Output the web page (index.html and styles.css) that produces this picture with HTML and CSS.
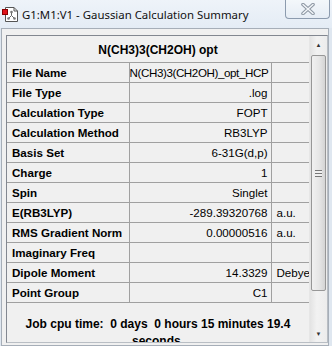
FILE: index.html
```html
<!DOCTYPE html>
<html lang="en">
<head>
    <meta charset="UTF-8">
    <title>G1:M1:V1 - Gaussian Calculation Summary</title>
    <link rel="stylesheet" href="styles.css">
</head>
<body>
    <div class="window">
        <div class="titlebar">
            <svg class="app-icon" width="17" height="17" viewBox="0 0 17 17">
                <path d="M3.5 1.5 H12 L15.5 5 V15.5 H3.5 Z" fill="#fff" stroke="#555"/>
                <path d="M12 1.5 V5 H15.5" fill="none" stroke="#555"/>
                <line x1="9.5" y1="6" x2="9.5" y2="9.5" stroke="#666"/>
                <line x1="9.5" y1="9.5" x2="6.5" y2="12.5" stroke="#666"/>
                <line x1="9.5" y1="9.5" x2="12.5" y2="12.5" stroke="#666"/>
                <circle cx="9.5" cy="6" r="1.3" fill="#777"/>
                <circle cx="6.5" cy="12.5" r="1.3" fill="#777"/>
                <circle cx="12.5" cy="12.5" r="1.3" fill="#777"/>
                <rect x="0.5" y="3.5" width="5" height="5" fill="#e0141b" stroke="#8a0000"/>
            </svg>
            <span class="title">G1:M1:V1 - Gaussian Calculation Summary</span>
            <div class="close-btn">
                <svg width="16" height="12" viewBox="0 0 16 12">
                    <path d="M3 1.5 L13 10.5 M13 1.5 L3 10.5" stroke="#8e98a4" stroke-width="3.6" stroke-linecap="round"/>
                    <path d="M3 1.5 L13 10.5 M13 1.5 L3 10.5" stroke="#f4f7fa" stroke-width="1.4" stroke-linecap="round"/>
                </svg>
            </div>
        </div>
        <div class="client">
            <div class="frame">
                <div class="view">
                    <div class="view-content">
                        <div class="summary-head">N(CH3)3(CH2OH) opt</div>
                        <table class="summary">
                            <colgroup>
                                <col class="c-label">
                                <col class="c-val">
                                <col class="c-unit">
                            </colgroup>
                            <tr><th>File Name</th><td class="val tight">N(CH3)3(CH2OH)_opt_HCP</td><td class="unit"></td></tr>
                            <tr><th>File Type</th><td class="val">.log</td><td class="unit"></td></tr>
                            <tr><th>Calculation Type</th><td class="val">FOPT</td><td class="unit"></td></tr>
                            <tr><th>Calculation Method</th><td class="val">RB3LYP</td><td class="unit"></td></tr>
                            <tr><th>Basis Set</th><td class="val">6-31G(d,p)</td><td class="unit"></td></tr>
                            <tr><th>Charge</th><td class="val">1</td><td class="unit"></td></tr>
                            <tr><th>Spin</th><td class="val">Singlet</td><td class="unit"></td></tr>
                            <tr><th>E(RB3LYP)</th><td class="val">-289.39320768</td><td class="unit">a.u.</td></tr>
                            <tr><th>RMS Gradient Norm</th><td class="val">0.00000516</td><td class="unit">a.u.</td></tr>
                            <tr><th>Imaginary Freq</th><td class="val"></td><td class="unit"></td></tr>
                            <tr><th>Dipole Moment</th><td class="val">14.3329</td><td class="unit">Debye</td></tr>
                            <tr><th>Point Group</th><td class="val">C1</td><td class="unit"></td></tr>
                        </table>
                        <div class="summary-foot">Job cpu time:&nbsp; 0 days&nbsp; 0 hours 15 minutes 19.4 seconds.</div>
                    </div>
                    <div class="scrollbar">
                        <div class="arrow">&#9650;</div>
                        <div class="track">
                            <div class="thumb"><span class="grip"></span></div>
                        </div>
                        <div class="arrow">&#9660;</div>
                    </div>
                </div>
            </div>
        </div>
    </div>
</body>
</html>
```

FILE: styles.css
```css
body {
    margin: 0;
    width: 332px;
    height: 346px;
    overflow: hidden;
    font-family: "Liberation Sans", Arial, sans-serif;
    color: #000;
    background-color: #dfe7f0;
}

.window {
    display: flex;
    flex-direction: column;
    height: 346px;
}

.titlebar {
    height: 28px;
    display: flex;
    align-items: center;
    background: linear-gradient(#eef3f9, #e4ecf5);
    position: relative;
}

.app-icon {
    margin: 0 3px 0 2px;
}

.title {
    font-family: "Noto Sans", "Open Sans", sans-serif;
    font-size: 11.4px;
    color: #111;
    margin-top: 1px;
}

.close-btn {
    position: absolute;
    top: -1px;
    left: 285px;
    width: 43px;
    height: 19px;
    border: 1px solid #8c9bae;
    border-top: none;
    border-radius: 0 0 4px 4px;
    background: linear-gradient(#f4f8fb, #e6edf5);
    display: flex;
    align-items: center;
    justify-content: center;
}

.client {
    flex: 1;
    padding: 0 4px 0 1px;
    display: flex;
    min-height: 0;
}

.frame {
    flex: 1;
    border: 1px solid #a6aeb8;
    background-color: #f0f0f0;
    padding: 6px 0 2px 4px;
    display: flex;
    min-height: 0;
}

.view {
    flex: 1;
    display: flex;
    border: 1px solid #828790;
    border-right-color: #b9bec4;
    border-bottom-color: #b9bec4;
    background-color: #f0f0f0;
    min-height: 0;
    overflow: hidden;
}

.view-content {
    width: 302px;
    overflow: hidden;
}

.summary-head {
    height: 26px;
    line-height: 28px;
    text-align: center;
    font-weight: bold;
    font-size: 12px;
    border-bottom: 1px solid #a0a0a0;
}

.summary {
    border-collapse: collapse;
    table-layout: fixed;
    width: 302px;
    font-size: 11.6px;
}

.c-label {
    width: 122px;
}

.c-val {
    width: 142px;
}

.summary th,
.summary td {
    height: 19px;
    padding: 0;
    border: 1px solid #a0a0a0;
    border-top: none;
    white-space: nowrap;
    overflow: hidden;
}

.summary th {
    text-align: left;
    padding-left: 5px;
    border-left: none;
}

.summary .val {
    text-align: right;
    padding-right: 3px;
}

.summary .tight {
    letter-spacing: -0.4px;
}

.summary .unit {
    padding-left: 5px;
    border-right: none;
}

.summary-foot {
    padding: 13px 12px 0;
    text-align: center;
    font-weight: bold;
    font-size: 12px;
    line-height: 17px;
}

.scrollbar {
    width: 17px;
    display: flex;
    flex-direction: column;
    background: linear-gradient(to right, #e3e3e3, #f2f2f2 40%, #ececec);
    border-left: 1px solid #e6e6e6;
}

.arrow {
    height: 17px;
    font-size: 6px;
    color: #333;
    display: flex;
    align-items: center;
    justify-content: center;
}

.track {
    flex: 1;
    padding: 2px 1px;
    display: flex;
}

.thumb {
    flex: 1;
    margin-bottom: 32px;
    border: 1px solid #979797;
    border-radius: 2px;
    background: linear-gradient(to right, #f1f1f1, #e6e6e6 55%, #d4d4d4);
    display: flex;
    align-items: center;
    justify-content: center;
}

.grip {
    width: 7px;
    height: 5px;
    border-top: 1px solid #777;
    border-bottom: 1px solid #777;
    background: linear-gradient(#f0f0f0 2px, #777 2px, #777 3px, #f0f0f0 3px);
}
```
